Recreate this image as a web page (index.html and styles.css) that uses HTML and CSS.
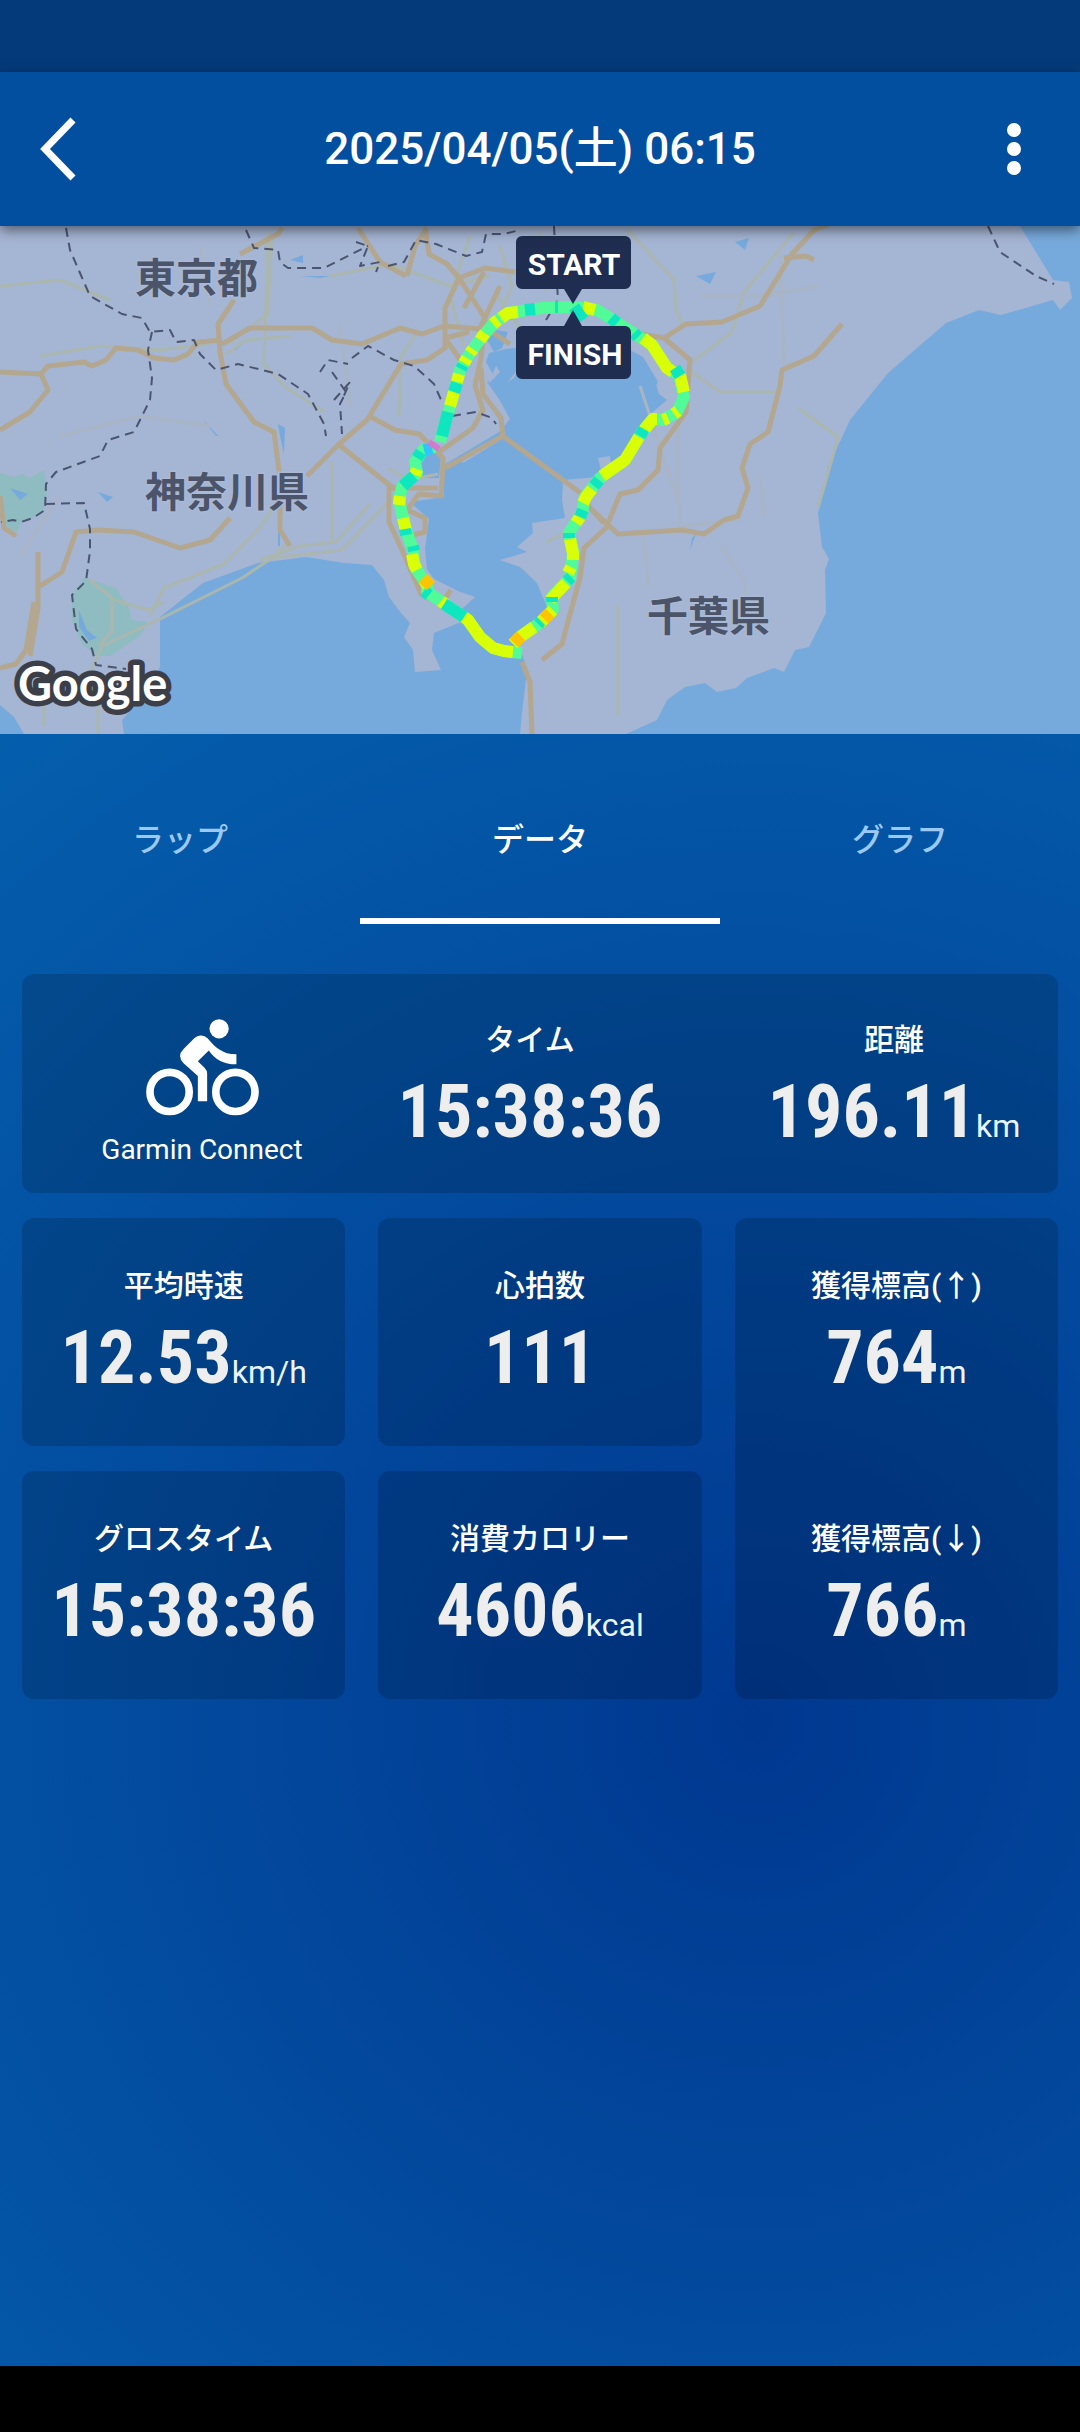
FILE: index.html
```
<!DOCTYPE html>
<html lang="ja">
	<head>
		<meta charset="utf-8">
		<meta name="viewport" content="width=device-width, initial-scale=1">
		<title>2025/04/05(土) 06:15</title>
		<link rel="stylesheet" href="styles.css">
	</head>
	<body>
		<div class="status-bar"></div>
		<header class="header">
			<button class="icon-button" type="button" aria-label="戻る">
				<svg class="icon-back" viewBox="0 0 36 64">
					<path d="M33 3L5 32l28 29" fill="none" stroke="#fff" stroke-width="7"/>
				</svg>
			</button>
			<h1 class="title">2025/04/05(土) 06:15</h1>
			<button class="icon-button" type="button" aria-label="メニュー">
				<svg class="icon-more" viewBox="0 0 14 52">
					<circle cx="7" cy="7" r="7"/>
					<circle cx="7" cy="26" r="7"/>
					<circle cx="7" cy="45" r="7"/>
				</svg>
			</button>
		</header>
		<main class="main">
			<div class="map">
				<svg class="map-image" viewBox="0 0 1080 508">
					<rect width="1080" height="508" fill="#a5b5d4"/>
					<!-- parks -->
					<g fill="#8fbcc0">
						<path d="M0 247l14 4 8-3 8 4 14-8 3 22-4 20-14 8-8 2-4 10-9-3-8-16z"/>
						<path d="M84 352l14 4 18 6 12 18 4 14 16 2-8 14-30 20-14 0-14-12-10-24 0-24z"/>
					</g>
					<!-- water -->
					<g fill="#77aadc">
						<path d="M489 127l17-4 10-1 114 2 13 7 14 23 2 14 8 6-20 17-7 16-17 27-26 17-34 3-1 20 3 18-33 5 1 10-16 14 10 5-27 8 20 7 17 16 10 24-4 13-30 17 10 20 4 13-5 43-2 21H124l-2-14 24-27 14-26v-50l43-34 55-20 48-6 38 6 28 2 12 15 5 17 12 16 9 10-6 14 9 13 2 22 26-2-9-20 2-17 27-11 2-14 12-11-17-6-24-12-7-10-2-20 4-30-19-17 34-5-2-31 57-34 11-13-11-20-12-17 8-4-9-16z"/>
						<path d="M1020 0l33 54 16 2 3 16-12 12-7-10-52 15-22-5-33 13-58 50-38 47-22 47-10 46 4 34 7 12-4 11 1 43-17 34-14 3-11 22-10-4-27 10-11 10-19 4-12-9-20 4-18 13-10 20-31 14h454V0z"/>
						<path d="M0 479l14 12 10 17H0z"/>
						<path d="M427 222l14 6-2 24-17 0-8-16z"/>
						<path d="M486 112l10-8 12 2-6 16-8 4z"/>
						<path d="M278 198l7 4-1 26-4-18zM202 192l16 18-2 0zM98 266l15 5-6 5zM10 262l18 6-8 6zM79 384l8 20 10 8-8 3-10-14zM290 34l13-5v8zM300 50h30l-10 2zM230 124l14-8-8 8zM735 16l14-4-4 12zM696 50l20-4-6 12zM690 324l6-16-4 4zM278 306h2v14h-2zM128 422l12 14z"/>
					</g>
					<!-- reclaimed islands -->
					<g fill="#a5b5d4">
						<path d="M447 224l34-20 6 6-32 20zM460 232l36-20 3 3-36 22zM598 232l12-2 2 14-10 4zM656 158l12 5 2 6-11-1z"/>
						<path d="M508 156l12-16-6 12zM488 158l8-18 4 6z"/>
					</g>
					<!-- local roads -->
					<g class="road-minor">
						<path d="M268 8l-4 130 20 22 40 26M272 8l-4 80-40 30M226 128l20-14 46-4M0 60l60-6 50 20M40 130l60-10 60 4 50-6M330 50l60-12 60 22 40-10M470 10l-20 60 14 50"/>
						<path d="M150 390l14-28 60-24 34-34 14-20M80 470l22-50 60-28 80-40 30-20 70-8 60-62M260 334l40-14 36-4 34-38M44 500l0-40M98 508l0-28M332 235v80M399 190l2-60 16-24"/>
						<path d="M90 354l24 20 34 10M112 375l0 30-12 14M148 384l16-8M270 334l10-10 10-8"/>
						<path d="M628 4l46 50 2 30 8 18M686 142l34 24h60M692 136l40-30 12-40 50-60M798 182l42 30M838 212l-20 70M618 380v110"/>
						<path d="M495 66l26 38M500 20l12 40-16 40M540 6l6 60M560 10l10 60M478 196l4-60M388 242l20 12 30-6M546 316l26-12"/>
					</g>
					<g class="road-faint">
						<path d="M760 250l4 40M640 160l40 120 0 20 60-6M644 310l4 50M720 320l24 34 2 20M700 70l60 0 60-10M780 20l4 120M678 190v90M60 210l80-20 70 10M20 330l40-60M340 100l10 80M200 20l10 60"/>
					</g>
					<!-- expressways -->
					<g class="road">
						<path d="M0 146l41 2 7-8 36-4 8 4 14-6 10-12 22 2 16 8 20 2 14-6 10-12 24-2M41 148l7 16-18 22-30 18"/>
						<path d="M240 28l38-20 4-6M234 74l-16 24 2 28 6 32 28 38 20 10 6 46v52l10 16"/>
						<path d="M222 118l28-16h62l20 12 30 4 38-16 22 6 22-8 50 4"/>
						<path d="M358 2l22 34 26 14M407 50l8-30 12-18M425 2l4 26 18 10 12 14 26-10 30 4"/>
						<path d="M459 52l-14 30v40l-18 12-26 4-34 56-28 24-32 32M459 52l26 40-4 40-6 28 8 24-10 18-34 24"/>
						<path d="M338 218l50 40 12 8M369 190l26 14 24 4 24 24v10M389 260v36l14 30 18 42 20 10 10-14M388 262l50 0"/>
						<path d="M443 240l-2 30-22-2-12 16 18 8 0 14-16 4M445 242l58-32-2-18-18-24-2-26"/>
						<path d="M500 208l82 60 8 14 14 15M445 112l24-6M447 115l14 20M484 46l-20 36M480 98l30 20M500 60l-22 46"/>
						<path d="M636 107l28 5 22-14 36-2 38-16 32-52 22-24 20-8M784 32l22-2 8 4M664 112l26 22-4 52-26 36-2 22-20 20-18 4-14 34-22 20-4 30-10 36-8 30-20 16"/>
						<path d="M590 282l28 26 64-4 22 4 20-14 14-4 10-28-6-20 8-24 18-12 12-46 2-16 32-14 28-32"/>
						<path d="M0 442l16-4 10-14 8-48M38 326v56l-8 48M40 360l22-14 14-40 22-2 36 2 46 16 30-8 20-22M0 270l4 32 12 8M522 436l8 20 2 52"/>
					</g>
					<!-- prefecture borders -->
					<g class="border">
						<path d="M66 2l4 22 20 46 32 18 20 4 8 14 20-2 6 12 18-2 6 14 16 16 22-6 40 10 30 20 16 30 2 12"/>
						<path d="M152 106l-4 18 4 28-2 22-16 32-26 8-8 16-44 16-10 12-1 26-12 8-12 4-8-2-12 2M46 278l38-1 6 26 0 22-4 30-14 14 4 34 16 20 4 16 30 4"/>
						<path d="M246 4l8 18 24 2 2 12 8 6 36 0 44-22M356 16l12 4-8 20 20-4-4 10M388 40l16-4 12-22 20 4 30 12 16-4 4-18 18 0 16-4"/>
						<path d="M320 146l8-12 20 4M352 132l16-12 26 14 20 6 20 18 8 18M332 146l14 20-6 12 2 30M334 174l16-18-8 18M452 190l24-4 16 6 4 6M554 0l2 40 2 34-12 20"/>
						<path d="M988 0l12 26 36 24 18 8"/>
					</g>
					<!-- ride track, coloured by speed -->
					<g class="track">
						<path stroke="#50fb98" d="M573 81L543 82 527 84 508 87 495 96 482 111 470 127 460 144 452 174 445 197 440 216M435 221L423 224 415 236 417 247 402 261 399 274 405 301 413 324 415 341 427 359 427 366 442 376 468 394 480 411 493 422 504 425 522 427M513 418L520 411 537 399 553 384 552 371 570 352 573 327 569 307 582 287 585 271 600 252 625 234 642 206 653 193 663 194 677 186 684 171 679 149 667 142 652 119 633 107 613 94 597 84 573 81"/>
						<path stroke="#d9ff08" d="M518 86L508 87 501 92M498 94L493 98M485 107L480 114M473 123L470 127M467 132L464 137M459 148L457 156M454 166L450 180M417 243L415 249M400 270L399 279M403 292L406 304M412 328L414 338 417 344M424 354L428 360M441 375L446 379M464 391L468 394 480 411 493 422 504 425 513 426M513 418L520 411 534 401M540 397L553 384M550 374L566 357M568 347L571 341M573 334L573 327 570 313M576 297L580 291M583 277L586 271 592 263M602 250L625 234 639 211M644 204L653 193 657 193M663 194L668 192M674 188L678 185M684 166L680 149M673 146L667 142 652 119 643 112M595 84L583 81"/>
						<path stroke="#0ee6c0" d="M583 94L574 81M558 81L555 81M535 83L525 84M463 139L461 143M457 157L454 166M448 186L442 210M421 226L417 232M414 250L403 260M405 303L406 309M413 320L414 325M424 365L429 369M444 378L464 391M538 398L541 395M552 376L552 371M567 355L571 351M569 312L569 307M580 291L583 284M594 260L599 254M640 210L644 203M675 142L680 150M634 107L638 111M611 92L617 97"/>
						<path stroke="#ffc400" d="M423 352L431 360M514 417L521 410M544 393L550 387"/>
						<path stroke="#2fc4ff" d="M424 224L432 222"/>
						<path stroke="#d27ad0" stroke-width="6" d="M429 216L439 223"/>
					</g>
					<g class="place">
						<text x="135" y="67">東京都</text>
						<text x="145" y="281">神奈川県</text>
						<text x="647" y="405">千葉県</text>
					</g>
					<text class="google" x="18" y="475">Google</text>
					<g fill="#1f2e50">
						<path d="M522 10h103a6 6 0 0 1 6 6v41a6 6 0 0 1-6 6h-43l-9 15-9-15h-42a6 6 0 0 1-6-6V16a6 6 0 0 1 6-6z"/>
						<path d="M522 100h42l9-16 9 16h43a6 6 0 0 1 6 6v41a6 6 0 0 1-6 6H522a6 6 0 0 1-6-6v-41a6 6 0 0 1 6-6z"/>
					</g>
					<g class="pin-text">
						<text x="574" y="49">START</text>
						<text x="575" y="139">FINISH</text>
					</g>
				</svg>
			</div>
			<nav class="tabs">
				<a class="tab" href="#lap">ラップ</a>
				<a class="tab active" href="#data" aria-current="page">データ</a>
				<a class="tab" href="#graph">グラフ</a>
			</nav>
			<section class="cards">
				<div class="card summary">
					<div class="source">
						<svg class="icon-bike" viewBox="44 38 340 294">
							<circle cx="115" cy="260" r="59" fill="none" stroke="#fff" stroke-width="23"/>
							<circle cx="313" cy="260" r="59" fill="none" stroke="#fff" stroke-width="23"/>
							<circle cx="264" cy="70" r="29" fill="#fff"/>
							<path d="M208 90Q220 89 230 99C250 124 274 147 316 147V177C277 177 250 161 233 135L200 168 220 187Q228 195 228 205V288H200V212L157 174Q136 152 157 131L190 98Q198 91 208 90z" fill="#fff"/>
						</svg>
						<p class="source-name">Garmin Connect</p>
					</div>
					<div class="stat">
						<h2 class="label">タイム</h2>
						<p class="value">15:38:36</p>
					</div>
					<div class="stat distance">
						<h2 class="label">距離</h2>
						<p class="value">196.11<span class="unit">km</span></p>
					</div>
				</div>
				<div class="card stat">
					<h2 class="label">平均時速</h2>
					<p class="value">12.53<span class="unit">km/h</span></p>
				</div>
				<div class="card stat">
					<h2 class="label">心拍数</h2>
					<p class="value">111</p>
				</div>
				<div class="card tall">
					<div class="stat">
						<h2 class="label">獲得標高(↑)</h2>
						<p class="value">764<span class="unit">m</span></p>
					</div>
					<div class="stat">
						<h2 class="label">獲得標高(↓)</h2>
						<p class="value">766<span class="unit">m</span></p>
					</div>
				</div>
				<div class="card stat">
					<h2 class="label">グロスタイム</h2>
					<p class="value">15:38:36</p>
				</div>
				<div class="card stat">
					<h2 class="label">消費カロリー</h2>
					<p class="value">4606<span class="unit">kcal</span></p>
				</div>
			</section>
		</main>
		<div class="nav-bar"></div>
	</body>
</html>
```
FILE: styles.css
```
*{
	margin: 0;
	padding: 0;
	box-sizing: border-box;
}
body{
	display: flex;
	flex-direction: column;
	min-height: 100vh;
	color: #fff;
	background: #000;
	font-family: Roboto, "Noto Sans CJK JP", sans-serif;
}
.status-bar{
	height: 72px;
	background: #053a7a;
}
.header{
	position: relative;
	display: flex;
	align-items: center;
	justify-content: space-between;
	height: 154px;
	background: #034f9f;
	box-shadow: 0 4px 12px rgba(0, 0, 0, .5);
}
.title{
	font-size: 44px;
	font-weight: 500;
	line-height: 60px;
}
.icon-button{
	display: flex;
	align-items: center;
	width: 132px;
	height: 132px;
	padding: 0 59px;
	border: 0;
	background: none;
}
.icon-button:first-child{
	padding: 0 40px;
}
.icon-back{
	flex: none;
	width: 36px;
	height: 64px;
}
.icon-more{
	flex: none;
	width: 14px;
	height: 52px;
	fill: #fff;
}
.main{
	flex: 1;
	background: radial-gradient(circle at 70% 70%, #003890, #0560ae 1300px);
}
.map-image{
	display: block;
	width: 100%;
}
.road, .road-minor, .road-faint, .border, .track{
	fill: none;
	stroke-linejoin: round;
}
.road{
	stroke: #b3a78f;
	stroke-width: 5;
}
.road-minor{
	stroke: #abb7ae;
	stroke-width: 3;
}
.road-faint{
	stroke: #a9b5c4;
	stroke-width: 3;
}
.border{
	stroke: #4c5570;
	stroke-width: 2;
	stroke-dasharray: 9 6;
}
.track{
	stroke-width: 12;
}
.place{
	fill: #4b5468;
	stroke: #a9b9d6;
	stroke-width: 3;
	paint-order: stroke;
	font-size: 41px;
	font-weight: 700;
}
.google{
	fill: #fff;
	stroke: #3c3f48;
	stroke-width: 11;
	stroke-linejoin: round;
	paint-order: stroke;
	font-family: Lato, sans-serif;
	font-size: 47px;
	font-weight: 700;
}
.pin-text{
	fill: #fff;
	font-size: 30px;
	font-weight: 700;
	text-anchor: middle;
}
.tabs{
	display: flex;
	height: 190px;
}
.tab{
	flex: 1;
	padding-top: 82px;
	border-bottom: 6px solid transparent;
	color: #9cc8f4;
	font-size: 32px;
	font-weight: 500;
	line-height: 48px;
	text-align: center;
	text-decoration: none;
}
.active{
	border-color: #fff;
	color: #fff;
}
.cards{
	display: grid;
	grid-template-columns: repeat(3, 1fr);
	gap: 25px 33px;
	padding: 50px 22px;
}
.card{
	border-radius: 12px;
	background: rgba(0, 0, 0, .16);
}
.summary{
	grid-column: 1 / 4;
	display: grid;
	grid-template-columns: 328fr 328fr 364fr;
	padding-left: 16px;
	height: 219px;
}
.tall{
	grid-row: 2 / 4;
	grid-column: 3;
	display: grid;
	row-gap: 25px;
}
.stat{
	height: 228px;
	padding-top: 48px;
	text-align: center;
}
.summary .stat{
	padding-top: 46px;
}
.summary .distance{
	padding-left: 36px;
}
.label{
	font-size: 30px;
	font-weight: 500;
	line-height: 40px;
}
.value{
	color: #eee;
	font-family: "Roboto Condensed", Roboto, sans-serif;
	font-size: 74px;
	font-weight: 700;
	line-height: 104px;
}
.unit{
	color: #eaf6ff;
	font-family: Roboto, sans-serif;
	font-size: 32px;
	font-weight: 400;
}
.source{
	padding-top: 44px;
	text-align: center;
}
.icon-bike{
	display: block;
	width: 113px;
	height: 98px;
	margin: 0 auto 14px;
}
.source-name{
	font-size: 28px;
	line-height: 40px;
}
.nav-bar{
	height: 66px;
}
```
